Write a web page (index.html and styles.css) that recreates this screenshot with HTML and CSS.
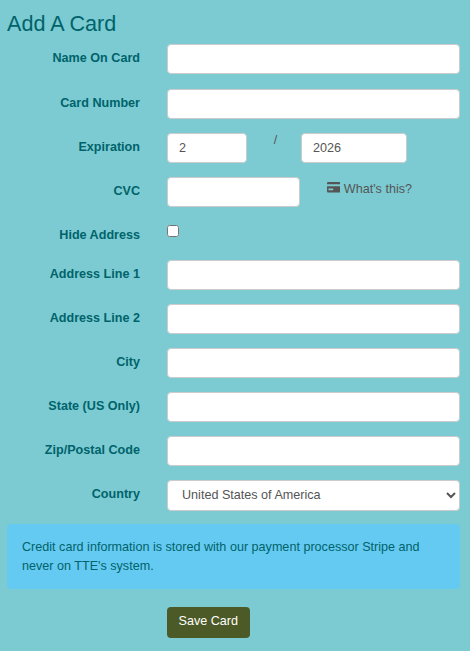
FILE: index.html
```html
<!DOCTYPE html>
<html lang="en">
<head>
    <meta charset="UTF-8">
    <meta name="viewport" content="width=device-width, initial-scale=1.0">
    <title>Add A Card</title>
    <link rel="stylesheet" href="styles.css">
</head>
<body>

<div class="container">
    <h1>Add A Card</h1>

    <div class="row">
        <label>Name On Card</label>
        <input type="text">
    </div>
    <div class="row">
        <label>Card Number</label>
        <input type="text">
    </div>
    <div class="row">
        <label>Expiration</label>
        <div class="expiry">
            <input type="text" class="month" value="2">
            <span class="slash">/</span>
            <input type="text" class="year" value="2026">
        </div>
    </div>
    <div class="row">
        <label>CVC</label>
        <div class="cvc">
            <input type="text" class="cvc-input">
            <a class="whats-this" href="#">
                <svg class="card-icon" viewBox="0 0 14 11"><path fill="#555" d="M0 1a1 1 0 0 1 1-1h12a1 1 0 0 1 1 1v1.500H0zM0 4.500h14V10a1 1 0 0 1-1 1H1a1 1 0 0 1-1-1zM1.500 7v1.800h5V7z"/></svg>
                What's this?
            </a>
        </div>
    </div>
    <div class="row row-check">
        <label>Hide Address</label>
        <input type="checkbox">
    </div>
    <div class="row">
        <label>Address Line 1</label>
        <input type="text">
    </div>
    <div class="row">
        <label>Address Line 2</label>
        <input type="text">
    </div>
    <div class="row">
        <label>City</label>
        <input type="text">
    </div>
    <div class="row">
        <label>State (US Only)</label>
        <input type="text">
    </div>
    <div class="row">
        <label>Zip/Postal Code</label>
        <input type="text">
    </div>
    <div class="row">
        <label>Country</label>
        <select>
            <option>United States of America</option>
        </select>
    </div>

    <div class="notice">Credit card information is stored with our payment processor Stripe and never on TTE's system.</div>

    <div class="actions">
        <button>Save Card</button>
    </div>
</div>

</body>
</html>
```

FILE: styles.css
```css
body {
    font-family: "Liberation Sans", Arial, sans-serif;
    font-size: 12.6px;
    margin: 0;
    padding: 0;
    background-color: #7ccbd2;
    color: #555;
}

.container {
    padding: 0 10px 0 7px;
}

h1 {
    margin: 0;
    padding-top: 11px;
    height: 33.45px;
    font-size: 21.6px;
    line-height: 25px;
    font-weight: normal;
    color: #00636b;
}

.row {
    display: grid;
    grid-template-columns: 133px 293px;
    column-gap: 27px;
    margin-bottom: 14.1px;
}

.row label {
    text-align: right;
    font-weight: bold;
    color: #00636b;
    line-height: 18.9px;
    padding-top: 5px;
}

.row input[type="text"] {
    box-sizing: border-box;
    width: 100%;
    height: 30px;
    padding: 4px 11px;
    font: inherit;
    color: #555;
    background-color: white;
    border: 1px solid #ccc;
    border-radius: 4px;
}

.expiry {
    display: flex;
}

.row .expiry .month {
    width: 80px;
}

.row .expiry .year {
    width: 106px;
}

.slash {
    box-sizing: border-box;
    width: 54px;
    padding-left: 3px;
    text-align: center;
    line-height: 14px;
}

.cvc {
    display: flex;
}

.row .cvc .cvc-input {
    width: 133px;
}

.whats-this {
    margin-left: 27px;
    line-height: 24px;
    white-space: nowrap;
    color: #555;
    text-decoration: none;
}

.card-icon {
    width: 13.3px;
    height: 10.4px;
}

.row-check {
    height: 25px;
}

.row-check input {
    margin: 4.5px 0 0;
    width: 12px;
    height: 12px;
}

select {
    box-sizing: border-box;
    width: 100%;
    height: 31px;
    padding: 2px 10px 4px;
    font: inherit;
    color: #555;
    background-color: white;
    border: 1px solid #ccc;
    border-radius: 4px;
}

.notice {
    margin-top: -1.2px;
    padding: 13.5px 15px;
    background-color: #65caf1;
    color: #00636b;
    line-height: 18.9px;
    border-radius: 4px;
}

.actions {
    padding: 18px 0 0 160px;
}

.actions button {
    height: 31px;
    padding: 0 11.5px 4px;
    font: inherit;
    color: white;
    background-color: #4b5a26;
    border: none;
    border-radius: 4px;
}
```
